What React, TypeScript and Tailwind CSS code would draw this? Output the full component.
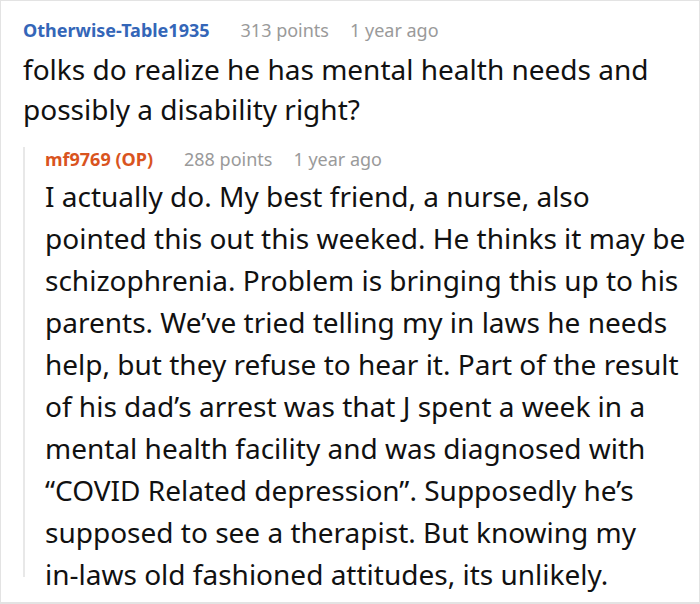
import React from "react";

type Comment = {
  author: string;
  op?: boolean;
  points: number;
  age: string;
  lines: string[];
};

const PARENT: Comment = {
  author: "Otherwise-Table1935",
  points: 313,
  age: "1 year ago",
  lines: ["folks do realize he has mental health needs and", "possibly a disability right?"],
};

const REPLY: Comment = {
  author: "mf9769 (OP)",
  op: true,
  points: 288,
  age: "1 year ago",
  lines: [
    "I actually do. My best friend, a nurse, also",
    "pointed this out this weeked. He thinks it may be",
    "schizophrenia. Problem is bringing this up to his",
    "parents. We\u2019ve tried telling my in laws he needs",
    "help, but they refuse to hear it. Part of the result",
    "of his dad\u2019s arrest was that J spent a week in a",
    "mental health facility and was diagnosed with",
    "\u201cCOVID Related depression\u201d. Supposedly he\u2019s",
    "supposed to see a therapist. But knowing my",
    "in-laws old fashioned attitudes, its unlikely.",
  ],
};

function CommentHeader({ c }: { c: Comment }) {
  return (
    <div className="flex items-center text-[18px] leading-6">
      <span className={`mr-[31px] font-bold ${c.op ? "text-[#d9541e]" : "text-[#3466b8]"}`}>{c.author}</span>
      <span className="mr-[21px] text-[#9a9a9a]">{c.points} points</span>
      <span className="text-[#9a9a9a]">{c.age}</span>
    </div>
  );
}

function Body({ lines, leading }: { lines: string[]; leading: string }) {
  return (
    <p className={`whitespace-nowrap text-[28px] ${leading}`}>
      {lines.map((l, i) => (
        <React.Fragment key={i}>
          {l}
          {i < lines.length - 1 && <br />}
        </React.Fragment>
      ))}
    </p>
  );
}

export default function App() {
  return (
    <div
      className="h-[604px] w-[700px] overflow-hidden border border-b-2 border-[#e3e3e3] bg-white text-[#111]"
      style={{ fontFamily: '"Noto Sans", "Open Sans", sans-serif' }}
    >
      <div className="pl-[22px] pt-[17px]">
        <CommentHeader c={PARENT} />
        <div className="mt-[7px]">
          <Body lines={PARENT.lines} leading="leading-[40px]" />
        </div>
        <div className="mt-[25px] h-[430px] border-l-2 border-[#e8e8e8] pl-[20px]">
          <div className="-mt-[7px]">
            <CommentHeader c={REPLY} />
          </div>
          <div className="mt-[4px]">
            <Body lines={REPLY.lines} leading="leading-[42px]" />
          </div>
        </div>
      </div>
    </div>
  );
}
